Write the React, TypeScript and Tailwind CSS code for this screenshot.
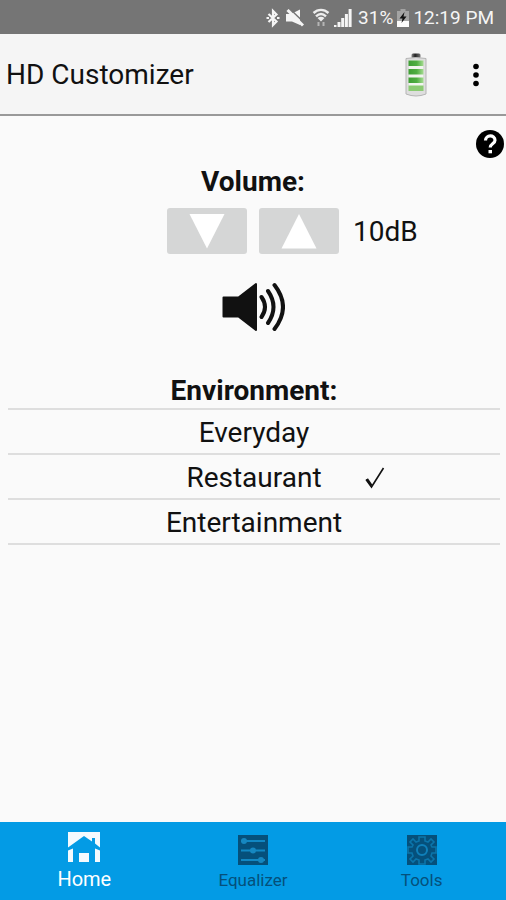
import * as React from "react";

const environments = ["Everyday", "Restaurant", "Entertainment"];

function StatusBar() {
  return (
    <div className="flex h-[34px] items-center justify-end bg-[#757575] pt-0.5 pr-3 text-[#f5f5f5]">
      <svg aria-hidden viewBox="0 0 14 20" className="mr-1.5 h-5 w-3.5" fill="none" stroke="#f5f5f5" strokeWidth="2.200">
        <path d="M2.500 6 10.500 13.500 7 17V3l3.500 3.500-8 7.500" />
        <path d="M0.500 10h2.500M11 10h2.500" />
      </svg>
      <svg aria-hidden viewBox="0 0 18 18" className="mr-2 size-[18px]">
        <path d="M0 5h5l9-4.500v15.500L6 12.500H0z" fill="#f5f5f5" />
        <path d="M4 0 18 13.500" stroke="#757575" strokeWidth="1.500" />
        <path d="M1.500 1 17 16.500" stroke="#f5f5f5" strokeWidth="3" />
      </svg>
      <svg aria-hidden viewBox="0 0 18 20" className="mr-1 h-5 w-[18px]" fill="none">
        <path d="M1.500 5C6 0.800 12 0.800 16.500 5M4 8.300c3.200-3 6.800-3 10 0" stroke="#ececec" strokeWidth="2.400" />
        <path d="M5.500 10Q9 7.500 12.500 10L9 13.500z" fill="#ececec" />
        <path d="M6.500 18v-4M11.500 14v4" stroke="#b5b5b5" strokeWidth="2" />
      </svg>
      <svg aria-hidden viewBox="0 0 18 18" className="mr-1.5 size-[18px]" fill="#f5f5f5">
        <path d="M0 16h2.500v2H0zM3.500 13h3v5h-3zM7.200 9h3v9h-3zM10.900 5h3v13h-3zM14.600 0h3v18h-3z" />
      </svg>
      <span className="text-[19px] leading-6">31%</span>
      <svg aria-hidden viewBox="0 0 12 18" className="mx-1 h-[18px] w-3">
        <path d="M3.500 0h5v2H12v16H0V2h3.500z" fill="#a3a3a3" />
        <path d="M0 12h12v6H0z" fill="#fafafa" />
        <path d="M7.500 3 2.500 9.500h3L4.500 14 9.500 7.500h-3z" fill="#111" />
      </svg>
      <span className="text-[19px] leading-6">12:19 PM</span>
    </div>
  );
}

function Header() {
  return (
    <header className="flex h-[82px] items-center border-b-2 border-[#999] bg-[#f5f5f5] pt-0.5 pr-[26px] pl-1.5">
      <h1 className="flex-1 text-[28px] leading-8 font-normal">HD Customizer</h1>
      <svg role="img" aria-label="Battery level" viewBox="0 0 22 44" className="mr-[45px] h-11 w-[22px]">
        <defs>
          <linearGradient id="cell">
            <stop offset="0" stopColor="#3f9e35" />
            <stop offset="0.55" stopColor="#4fae42" />
            <stop offset="1" stopColor="#a6dc92" />
          </linearGradient>
          <linearGradient id="cap">
            <stop offset="0" stopColor="#888" />
            <stop offset="0.4" stopColor="#222" />
            <stop offset="1" stopColor="#777" />
          </linearGradient>
        </defs>
        <rect x="6.500" y="0.500" width="9" height="5" rx="1.500" fill="url(#cap)" />
        <path d="M1 5.500Q11 3.500 21 5.500V41Q11 45 1 41Z" fill="#dedede" stroke="#b5b5b5" />
        <path d="M4 7.500h14v30.500H4z" fill="#f1f5ef" />
        <path d="M3.500 7.500h15v5.500h-15zM3.500 16h15v5.500h-15zM3.500 24.500h15V30h-15z" fill="url(#cell)" />
        <path d="M3.500 32.500h15V38h-15z" fill="#8bcb73" />
      </svg>
      <button type="button" aria-label="More options" className="flex h-10 w-2 items-center justify-center">
        <svg aria-hidden viewBox="0 0 6 24" className="h-6 w-1.5">
          <circle cx="3" cy="3.500" r="2.800" />
          <circle cx="3" cy="12" r="2.800" />
          <circle cx="3" cy="20.500" r="2.800" />
        </svg>
      </button>
    </header>
  );
}

function VolumeButton({ label, points, onClick }: { label: string; points: string; onClick: () => void }) {
  return (
    <button
      type="button"
      aria-label={label}
      onClick={onClick}
      className="flex h-[46px] w-20 items-center justify-center rounded-[3px] bg-[#d5d6d6]"
    >
      <svg aria-hidden viewBox="0 0 36 36" className="size-9" fill="#fff">
        <polygon points={points} />
      </svg>
    </button>
  );
}

function HomeIcon() {
  return (
    <svg aria-hidden viewBox="0 0 32 32" className="size-8">
      <path d="M0 1h32v30H0z" fill="#f4fafe" />
      <path d="M16 5 0 16.500V19.500l5-2V31h6V22h10v9h6V17.500l5 2V16.500l-5-4V7h-3v3.500z" fill="#039be5" />
      <path d="M11 22h10v9H11z" fill="#f4fafe" />
    </svg>
  );
}

function EqualizerIcon() {
  return (
    <svg aria-hidden viewBox="0 0 32 32" className="size-8">
      <path d="M1 1h30v30H1z" fill="#05507b" />
      <path d="M4 7h24M4 16.500h24M4 26h24" stroke="#1187c3" strokeWidth="2" />
      <g fill="#1687c0">
        <circle cx="7" cy="7" r="3" />
        <circle cx="16" cy="16.500" r="3" />
        <circle cx="24" cy="26" r="3" />
      </g>
    </svg>
  );
}

function ToolsIcon() {
  return (
    <svg aria-hidden viewBox="0 0 32 32" className="size-8" fill="none">
      <path d="M1 1h30v30H1z" fill="#05507b" />
      <path
        d="M13 3h6v4l3 1 3-3 3 3-3 3 1 2h4v6h-4l-1 3 3 3-3 3-3-3-3 1v4h-6v-4l-3-1-3 3-3-3 3-3-1-3H2v-6h4l1-2-3-3 3-3 3 3 3-1z"
        stroke="#0b75ab"
        strokeWidth="1.600"
      />
      <circle cx="16" cy="16" r="5" stroke="#0f80ba" strokeWidth="2" />
    </svg>
  );
}

const tabs = [
  { name: "Home", icon: HomeIcon },
  { name: "Equalizer", icon: EqualizerIcon },
  { name: "Tools", icon: ToolsIcon },
];

export default function App() {
  const [volume, setVolume] = React.useState(10);
  const [environment, setEnvironment] = React.useState("Restaurant");
  const [tab, setTab] = React.useState("Home");

  return (
    <div className="flex min-h-screen flex-col bg-[#fafafa] font-[Roboto,sans-serif] text-[#111]">
      <StatusBar />
      <Header />
      <main className="flex flex-1 flex-col">
        <div className="flex justify-end pt-3.5 pr-0.5">
          <button type="button" aria-label="Help">
            <svg aria-hidden viewBox="0 0 28 28" className="size-7" fill="none">
              <circle cx="14" cy="14" r="14" fill="#000" />
              <path d="M9.500 10.500C9.500 4.500 19 4.500 19 10.200c0 3.600-4.800 3.600-4.800 7.300" stroke="#fff" strokeWidth="3.200" />
              <path d="M12.500 20h3.500v3.300h-3.500z" fill="#fff" />
            </svg>
          </button>
        </div>

        <section className="flex flex-col items-center">
          <h2 className="mt-2 text-[28px] leading-8 font-bold">Volume:</h2>
          <div className="mt-2.5 grid w-full grid-cols-[1fr_auto_1fr] items-center">
            <span />
            <div className="flex gap-3">
              <VolumeButton label="Volume down" points="0.500,1 35.500,1 18,35.500" onClick={() => setVolume(volume - 1)} />
              <VolumeButton label="Volume up" points="0.500,35.500 35.500,35.500 18,1" onClick={() => setVolume(volume + 1)} />
            </div>
            <output className="pt-0.5 pl-3.5 text-[28px] leading-8">{volume}dB</output>
          </div>
          <button type="button" aria-label="Mute" className="mt-7">
            <svg aria-hidden viewBox="0 0 64 50" className="h-[50px] w-16" fill="none">
              <path d="M2.500 15.500h15L35 2v46L17.500 34.500h-15z" fill="#111" stroke="#111" strokeWidth="2" strokeLinejoin="round" />
              <path d="M40.500 15q7 10 0 20M47 9q11 16 0 32M53.500 3q17 22 0 44" stroke="#111" strokeWidth="4" strokeLinecap="round" />
            </svg>
          </button>
        </section>

        <section className="mt-[43px] pr-1.5 pl-2 text-center">
          <h2 className="text-[28px] leading-8 font-bold">Environment:</h2>
          <ul className="mt-px border-t-2 border-[#dedede]">
            {environments.map((name) => (
              <li key={name} className="border-b-2 border-[#dedede]">
                <button
                  type="button"
                  aria-pressed={environment === name}
                  onClick={() => setEnvironment(name)}
                  className="grid h-[43px] w-full grid-cols-[1fr_auto_1fr] items-center pt-0.5 text-[28px] leading-8"
                >
                  <span />
                  <span>{name}</span>
                  {environment === name ? (
                    <svg aria-hidden viewBox="0 0 20 22" className="ml-[43px] h-[22px] w-5" fill="none" stroke="#111" strokeWidth="1.600">
                      <path d="M1 12.500 6.500 20 18.500 1" />
                      <path d="M2 12 6.500 18.500" strokeWidth="2.200" />
                    </svg>
                  ) : null}
                </button>
              </li>
            ))}
          </ul>
        </section>
      </main>

      <nav className="grid h-[78px] grid-cols-3 bg-[#039be5]">
        {tabs.map(({ name, icon: Icon }) => (
          <button
            key={name}
            type="button"
            aria-current={tab === name ? "page" : undefined}
            onClick={() => setTab(name)}
            className={`flex flex-col items-center ${tab === name ? "gap-0.5 pt-[9px] text-xl text-white" : "pt-3 text-[17px] text-[#05507b]"}`}
          >
            <Icon />
            <span className="leading-7">{name}</span>
          </button>
        ))}
      </nav>
    </div>
  );
}
